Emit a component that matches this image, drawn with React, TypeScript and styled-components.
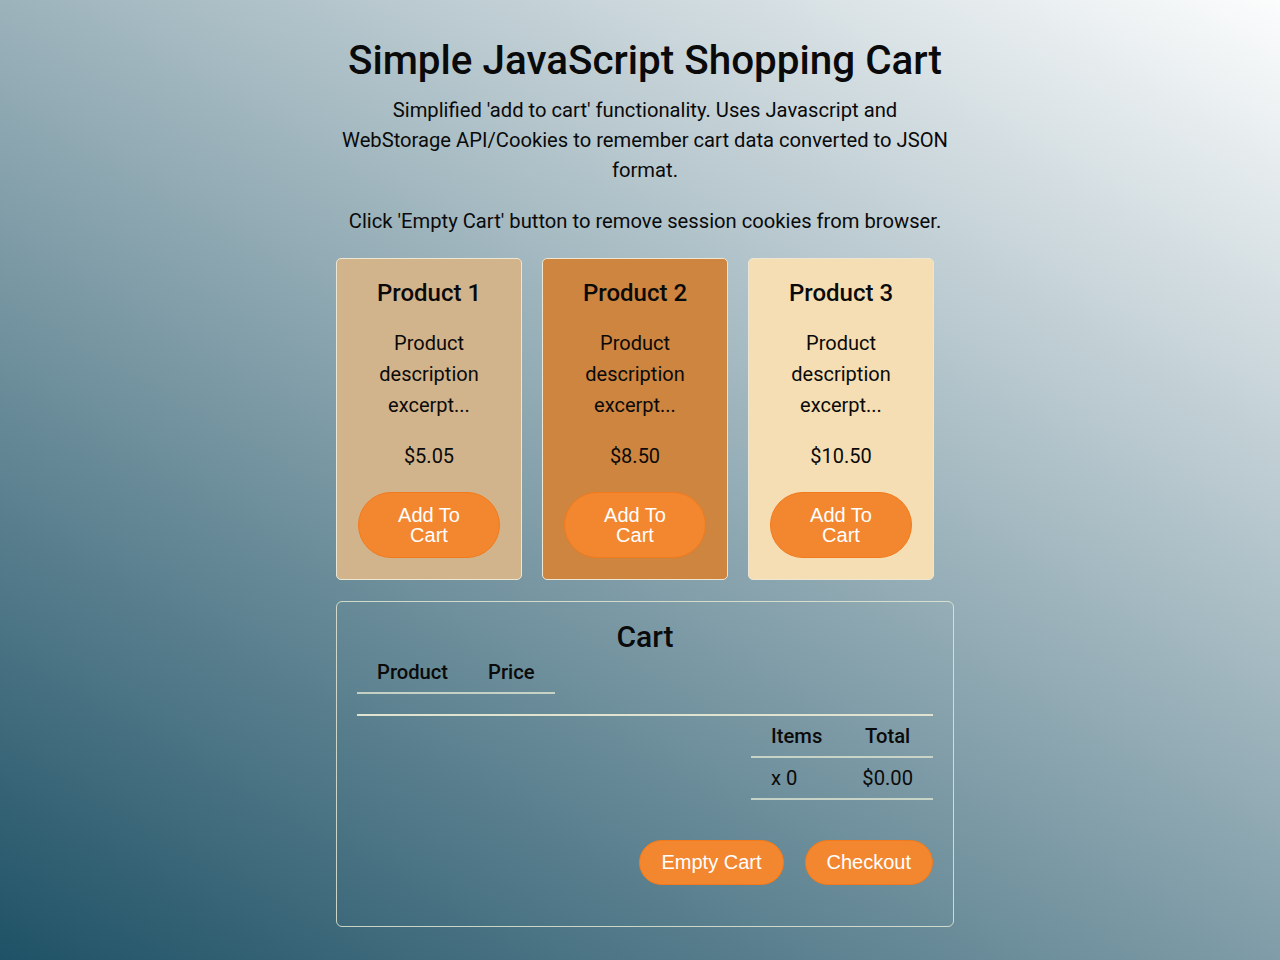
import styled, { createGlobalStyle } from "styled-components";

const GlobalStyle = createGlobalStyle`
  html, body {
    margin: 0;
    min-height: 100%;
  }
  body {
    min-height: 100vh;
    font-family: Roboto, "Liberation Sans", sans-serif;
    color: #0a0a0a;
    background: linear-gradient(30deg, #1f5266 0%, #fcfdfd 100%) fixed;
  }
`;

const Page = styled.div`
  padding: 37px 0 34px 10px;
`;

const Container = styled.main`
  width: 618px;
  margin: 0 auto;
`;

const Header = styled.header`
  text-align: center;
`;

const Title = styled.h1`
  margin: 0;
  font-size: 40.4px;
  font-weight: 500;
  line-height: 47px;
`;

const Intro = styled.p`
  margin: 11px auto 0;
  max-width: 612px;
  font-size: 20.2px;
  line-height: 30px;
`;

const Note = styled.p`
  margin: 21px 0 0;
  font-size: 20.2px;
  line-height: 30px;
`;

const ProductRow = styled.section`
  display: flex;
  margin-top: 22px;
`;

const Card = styled.article<{ $bg: string }>`
  box-sizing: border-box;
  width: 186px;
  margin-right: 20px;
  padding: 0 20px 21px;
  background: ${(p) => p.$bg};
  border: 1px solid #ece6d2;
  border-radius: 5px;
  text-align: center;
  display: flex;
  flex-direction: column;
  align-items: center;
`;

const CardTitle = styled.h2`
  margin: 19px 0 0;
  font-size: 24px;
  font-weight: 500;
  line-height: 30px;
`;

const CardText = styled.p`
  margin: 20px 0 0;
  font-size: 20px;
  line-height: 31px;
`;

const PillButton = styled.button`
  font-family: "Liberation Sans", Arial, sans-serif;
  font-size: 20px;
  color: #fff;
  background: #f3872f;
  border: 1px solid #f27a1c;
  border-radius: 34px;
  cursor: pointer;
`;

const AddButton = styled(PillButton)`
  width: 142px;
  margin-top: 20px;
  padding: 12px 30px;
  line-height: 20px;
`;

const CartBox = styled.section`
  margin-top: 21px;
  padding: 20px 20px 41px;
  border: 1px solid rgba(226, 230, 212, 0.85);
  border-radius: 6px;
`;

const CartTitle = styled.h2`
  margin: 0;
  text-align: center;
  font-size: 30px;
  font-weight: 500;
  line-height: 30px;
`;

const Table = styled.table<{ $right?: boolean }>`
  border-collapse: collapse;
  margin-left: ${(p) => (p.$right ? "auto" : "0")};
  font-size: 20.2px;
  line-height: 24px;

  th {
    font-weight: 500;
    padding: 8px 20px;
    border-bottom: 2px solid rgba(214, 222, 204, 0.85);
  }

  td {
    padding: 8px 20px;
    text-align: left;
    border-bottom: 2px solid rgba(214, 222, 204, 0.85);
  }
`;

const Divider = styled.hr`
  margin: 20px 0 0;
  border: none;
  height: 2px;
  background: #dfe3cf;
`;

const Actions = styled.div`
  display: flex;
  justify-content: flex-end;
  gap: 21px;
  margin-top: 40px;
`;

const ActionButton = styled(PillButton)`
  padding: 10px 21px;
  line-height: 23px;
`;

const products = [
  { title: "Product 1", price: "$5.05", bg: "#d2b48c" },
  { title: "Product 2", price: "$8.50", bg: "#cd853f" },
  { title: "Product 3", price: "$10.50", bg: "#f5deb3" },
];

const App = () => (
  <Page>
    <GlobalStyle />
    <Container>
      <Header>
        <Title>Simple JavaScript Shopping Cart</Title>
        <Intro>
          Simplified 'add to cart' functionality. Uses Javascript and
          WebStorage API/Cookies to remember cart data converted to JSON
          format.
        </Intro>
        <Note>Click 'Empty Cart' button to remove session cookies from browser.</Note>
      </Header>

      <ProductRow>
        {products.map((p) => (
          <Card key={p.title} $bg={p.bg}>
            <CardTitle>{p.title}</CardTitle>
            <CardText>Product description excerpt...</CardText>
            <CardText>{p.price}</CardText>
            <AddButton>Add To Cart</AddButton>
          </Card>
        ))}
      </ProductRow>

      <CartBox>
        <CartTitle>Cart</CartTitle>
        <Table>
          <thead>
            <tr>
              <th>Product</th>
              <th>Price</th>
            </tr>
          </thead>
        </Table>
        <Divider />
        <Table $right>
          <thead>
            <tr>
              <th>Items</th>
              <th>Total</th>
            </tr>
          </thead>
          <tbody>
            <tr>
              <td>x 0</td>
              <td>$0.00</td>
            </tr>
          </tbody>
        </Table>
        <Actions>
          <ActionButton>Empty Cart</ActionButton>
          <ActionButton>Checkout</ActionButton>
        </Actions>
      </CartBox>
    </Container>
  </Page>
);

export default App;
